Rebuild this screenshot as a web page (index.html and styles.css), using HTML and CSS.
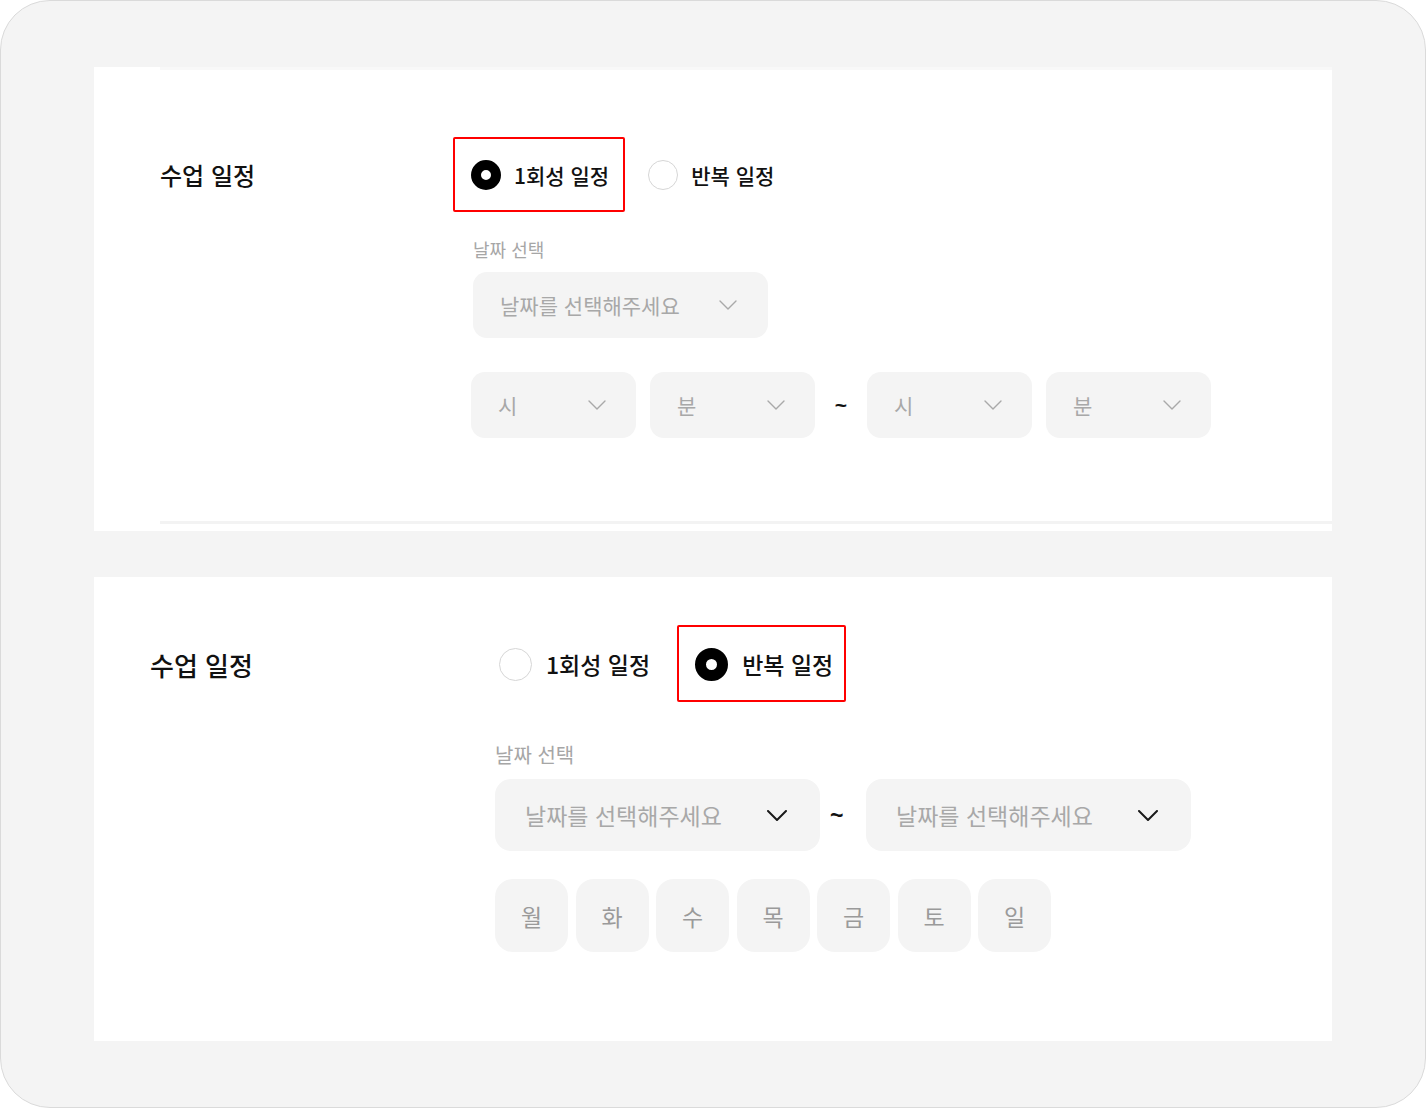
FILE: index.html
```html
<!DOCTYPE html>
<html lang="ko">
<head>
<meta charset="utf-8">
<title>수업 일정</title>
<link rel="stylesheet" href="styles.css">
</head>
<body>
<div class="frame">
  <section class="panel panel-one">
    <div class="inner">
      <div class="row">
        <div class="label">수업 일정</div>
        <div class="content">
          <div class="radios">
            <div class="option marked">
              <span class="radio checked"></span>
              <span class="opt-text">1회성 일정</span>
            </div>
            <div class="option">
              <span class="radio"></span>
              <span class="opt-text">반복 일정</span>
            </div>
          </div>
          <div class="field-label">날짜 선택</div>
          <div class="select date-select">
            <span>날짜를 선택해주세요</span>
            <svg class="chev" viewBox="0 0 18 10"><path d="M1 1 L9 9 L17 1"/></svg>
          </div>
          <div class="time-row">
            <div class="select time-select"><span>시</span><svg class="chev" viewBox="0 0 18 10"><path d="M1 1 L9 9 L17 1"/></svg></div>
            <div class="select time-select"><span>분</span><svg class="chev" viewBox="0 0 18 10"><path d="M1 1 L9 9 L17 1"/></svg></div>
            <div class="tilde">~</div>
            <div class="select time-select"><span>시</span><svg class="chev" viewBox="0 0 18 10"><path d="M1 1 L9 9 L17 1"/></svg></div>
            <div class="select time-select"><span>분</span><svg class="chev" viewBox="0 0 18 10"><path d="M1 1 L9 9 L17 1"/></svg></div>
          </div>
        </div>
      </div>
    </div>
  </section>

  <section class="panel panel-two">
    <div class="row">
      <div class="label">수업 일정</div>
      <div class="content">
        <div class="radios">
          <div class="option">
            <span class="radio"></span>
            <span class="opt-text">1회성 일정</span>
          </div>
          <div class="option marked">
            <span class="radio checked"></span>
            <span class="opt-text">반복 일정</span>
          </div>
        </div>
        <div class="field-label">날짜 선택</div>
        <div class="date-row">
          <div class="select date-select"><span>날짜를 선택해주세요</span><svg class="chev" viewBox="0 0 20 11"><path d="M1 1 L10 10 L19 1"/></svg></div>
          <div class="tilde">~</div>
          <div class="select date-select"><span>날짜를 선택해주세요</span><svg class="chev" viewBox="0 0 20 11"><path d="M1 1 L10 10 L19 1"/></svg></div>
        </div>
        <div class="days">
          <div class="day">월</div>
          <div class="day">화</div>
          <div class="day">수</div>
          <div class="day">목</div>
          <div class="day">금</div>
          <div class="day">토</div>
          <div class="day">일</div>
        </div>
      </div>
    </div>
  </section>
</div>
</body>
</html>
```

FILE: styles.css
```css
* { box-sizing: border-box; }

html, body {
  margin: 0;
  padding: 0;
  background: #ffffff;
}

body {
  font-family: "Noto Sans CJK KR", "Noto Sans", sans-serif;
  color: #111111;
}

.frame {
  width: 1426px;
  height: 1108px;
  background: #f4f4f4;
  border: 1px solid #dadada;
  border-radius: 50px;
  padding: 66px 93px 0 93px;
  display: flex;
  flex-direction: column;
  gap: 46px;
}

.panel {
  background: #ffffff;
  height: 464px;
}

/* ---------- panel one ---------- */
.panel-one .inner {
  margin-left: 66px;
  border-top: 3px solid #f8f8f8;
  border-bottom: 3px solid #f3f3f3;
  height: 457px;
  padding-top: 90px;
}

.row {
  display: flex;
  align-items: flex-start;
}

.panel-one .label {
  width: 311px;
  font-size: 24px;
  font-weight: 500;
  line-height: 30px;
}

.content {
  display: flex;
  flex-direction: column;
}

.radios {
  display: flex;
  align-items: center;
}

.option {
  position: relative;
  display: flex;
  align-items: center;
}

.option.marked::after {
  content: "";
  position: absolute;
  border: 2px solid #ff0000;
  border-radius: 2px;
}

.radio {
  display: block;
  border-radius: 50%;
  background: #ffffff;
  border: 1.5px solid #d6d6d6;
  flex: none;
}

.radio.checked {
  border-color: #000000;
}

.opt-text {
  font-weight: 500;
  color: #111111;
}

.panel-one .radio { width: 30px; height: 30px; }
.panel-one .radio.checked { border-width: 10px; }
.panel-one .opt-text { font-size: 21px; line-height: 30px; margin-left: 13px; }
.panel-one .option + .option { margin-left: 39px; }
.panel-one .option.marked::after { top: -23px; bottom: -22px; left: -18px; right: -16px; }

.field-label {
  color: #a6a6a6;
}

.panel-one .field-label {
  font-size: 18px;
  line-height: 24px;
  margin-top: 47px;
  margin-left: 2px;
}

.select {
  background: #f4f4f4;
  display: flex;
  align-items: center;
  justify-content: space-between;
  color: #a8a8a8;
}

.chev {
  display: block;
  fill: none;
  stroke-linecap: round;
  stroke-linejoin: round;
}

.panel-one .select {
  height: 66px;
  border-radius: 14px;
  font-size: 21px;
}

.panel-one .chev {
  width: 18px;
  height: 10px;
  stroke: #a9a9a9;
  stroke-width: 1.4;
}

.panel-one .date-select {
  margin-top: 11px;
  margin-left: 2px;
  width: 295px;
  padding: 0 31px 0 27px;
}

.time-row {
  display: flex;
  align-items: center;
  gap: 14px;
  margin-top: 34px;
}

.panel-one .time-select {
  width: 165px;
  padding: 0 30px 0 27px;
}

.tilde {
  color: #111111;
  font-weight: 700;
  font-family: "Liberation Sans", sans-serif;
}

.panel-one .tilde {
  width: 24px;
  text-align: center;
  font-size: 21px;
  line-height: 20px;
}

/* ---------- panel two ---------- */
.panel-two .row {
  padding-left: 56px;
  padding-top: 71px;
}

.panel-two .label {
  width: 345px;
  font-size: 26px;
  font-weight: 500;
  line-height: 32px;
  margin-top: 1px;
}

.panel-two .radio { width: 33px; height: 33px; }
.panel-two .radios { margin-left: 4px; }
.panel-two .radio.checked { border-width: 11px; }
.panel-two .opt-text { font-size: 23px; line-height: 33px; margin-left: 14px; }
.panel-two .option + .option { margin-left: 45px; }
.panel-two .option.marked::after { top: -23px; bottom: -21px; left: -18px; right: -13px; }

.panel-two .field-label {
  font-size: 20px;
  line-height: 26px;
  margin-top: 61px;
}

.date-row {
  display: flex;
  align-items: center;
  gap: 10px;
  margin-top: 11px;
}

.panel-two .select {
  height: 72px;
  border-radius: 16px;
  font-size: 23px;
}

.panel-two .date-select {
  width: 325px;
  padding: 0 33px 0 30px;
}

.panel-two .chev {
  width: 20px;
  height: 11px;
  stroke: #1a1a1a;
  stroke-width: 2;
}

.panel-two .tilde {
  width: 26px;
  font-size: 23px;
  line-height: 20px;
}

.days {
  display: flex;
  gap: 7.5px;
  margin-top: 28px;
}

.day {
  width: 73px;
  height: 73px;
  border-radius: 18px;
  background: #f4f4f4;
  color: #9a9a9a;
  font-size: 23px;
  display: flex;
  align-items: center;
  justify-content: center;
}
```
